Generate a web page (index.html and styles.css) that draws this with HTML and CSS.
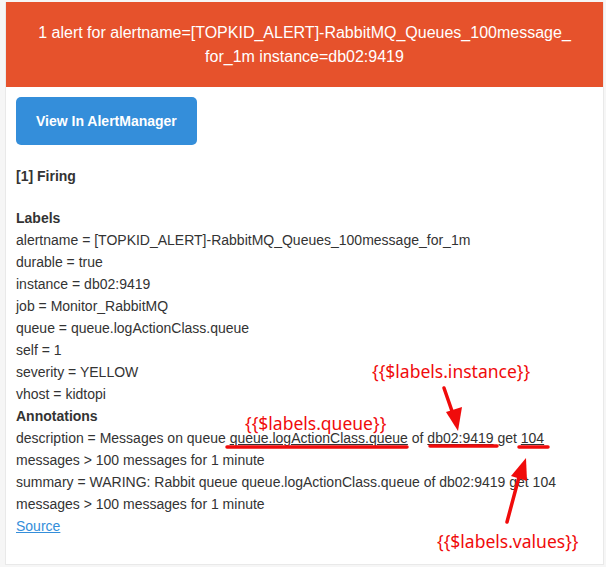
FILE: index.html
```html
<!DOCTYPE html>
<html>
<head>
<meta charset="utf-8">
<link rel="stylesheet" href="styles.css">
</head>
<body>
<div class="card">
  <div class="alert">1 alert for alertname=[TOPKID_ALERT]-RabbitMQ_Queues_100message_<br>for_1m instance=db02:9419</div>
  <div class="content">
    <a class="btn" href="#">View In AlertManager</a>
    <div class="body">
      <p class="firing"><strong>[1] Firing</strong></p>
      <strong>Labels</strong><br>
      alertname = [TOPKID_ALERT]-RabbitMQ_Queues_100message_for_1m<br>
      durable = true<br>
      instance = db02:9419<br>
      job = Monitor_RabbitMQ<br>
      queue = queue.logActionClass.queue<br>
      self = 1<br>
      severity = YELLOW<br>
      vhost = kidtopi<br>
      <strong>Annotations</strong><br>
      description = Messages on queue <span class="ul">queue.logActionClass.queue</span> of <span class="ul">db02:9419</span> get <span class="ul">104</span> messages &gt; 100 messages for 1 minute<br>
      summary = WARING: Rabbit queue queue.logActionClass.queue of db02:9419 get 104 messages &gt; 100 messages for 1 minute<br>
      <a class="src" href="#">Source</a><br>
    </div>
  </div>
</div>
<div class="overlay">
  <svg class="marks" width="606" height="567" viewBox="0 0 606 567">
    <g stroke="#f00b0b" stroke-width="3.5" stroke-linecap="round" fill="none">
      <line x1="227" y1="447" x2="407" y2="447"/>
      <line x1="430" y1="446" x2="497" y2="446"/>
      <line x1="519" y1="447" x2="548" y2="447"/>
      <line x1="444" y1="388" x2="453" y2="414"/>
      <line x1="507" y1="522" x2="519" y2="477"/>
    </g>
    <g fill="#f00b0b">
      <polygon points="458,431 446,412 462,407"/>
      <polygon points="526,458 511,476 527,481"/>
    </g>
  </svg>
  <span class="note n-instance">{{$labels.instance}}</span>
  <span class="note n-queue">{{$labels.queue}}</span>
  <span class="note n-values">{{$labels.values}}</span>
</div>
</body>
</html>
```
FILE: styles.css
```css
html, body {
  margin: 0;
  padding: 0;
}
body {
  background: #f6f6f6;
  font-family: "Liberation Sans", Arial, Helvetica, sans-serif;
  font-size: 14px;
  color: #333;
  position: relative;
  width: 606px;
  height: 567px;
  overflow: hidden;
}
.card {
  margin: 2px 0 0 5px;
  width: 599px;
  height: 563px;
  background: #fff;
  border: 1px solid #e9e9e9;
  border-top: none;
  box-sizing: border-box;
}
.alert {
  background: #e6522c;
  color: #fff;
  font-size: 16px;
  line-height: 24px;
  text-align: center;
  padding: 19px 20px 18px;
}
.content {
  padding: 10px;
}
.btn {
  display: inline-block;
  background: #348eda;
  color: #fff;
  font-weight: bold;
  text-decoration: none;
  line-height: 28px;
  padding: 10px 20px;
  border-radius: 5px;
  font-size: 14px;
}
.body {
  line-height: 22px;
  margin-top: 20px;
}
.firing {
  margin: 0 0 20px;
}
.ul {
  text-decoration: underline;
}
.src {
  color: #348eda;
  text-decoration: underline;
}
.overlay {
  position: absolute;
  left: 0;
  top: 0;
  width: 606px;
  height: 567px;
  pointer-events: none;
}
.marks {
  position: absolute;
  left: 0;
  top: 0;
}
.note {
  position: absolute;
  color: #f00b0b;
  font-family: "Noto Sans", "Open Sans", sans-serif;
  font-size: 17.5px;
  line-height: 22px;
  white-space: nowrap;
}
.n-instance { left: 372px; top: 360px; }
.n-queue { left: 245px; top: 412px; }
.n-values { left: 437px; top: 530px; }
```
